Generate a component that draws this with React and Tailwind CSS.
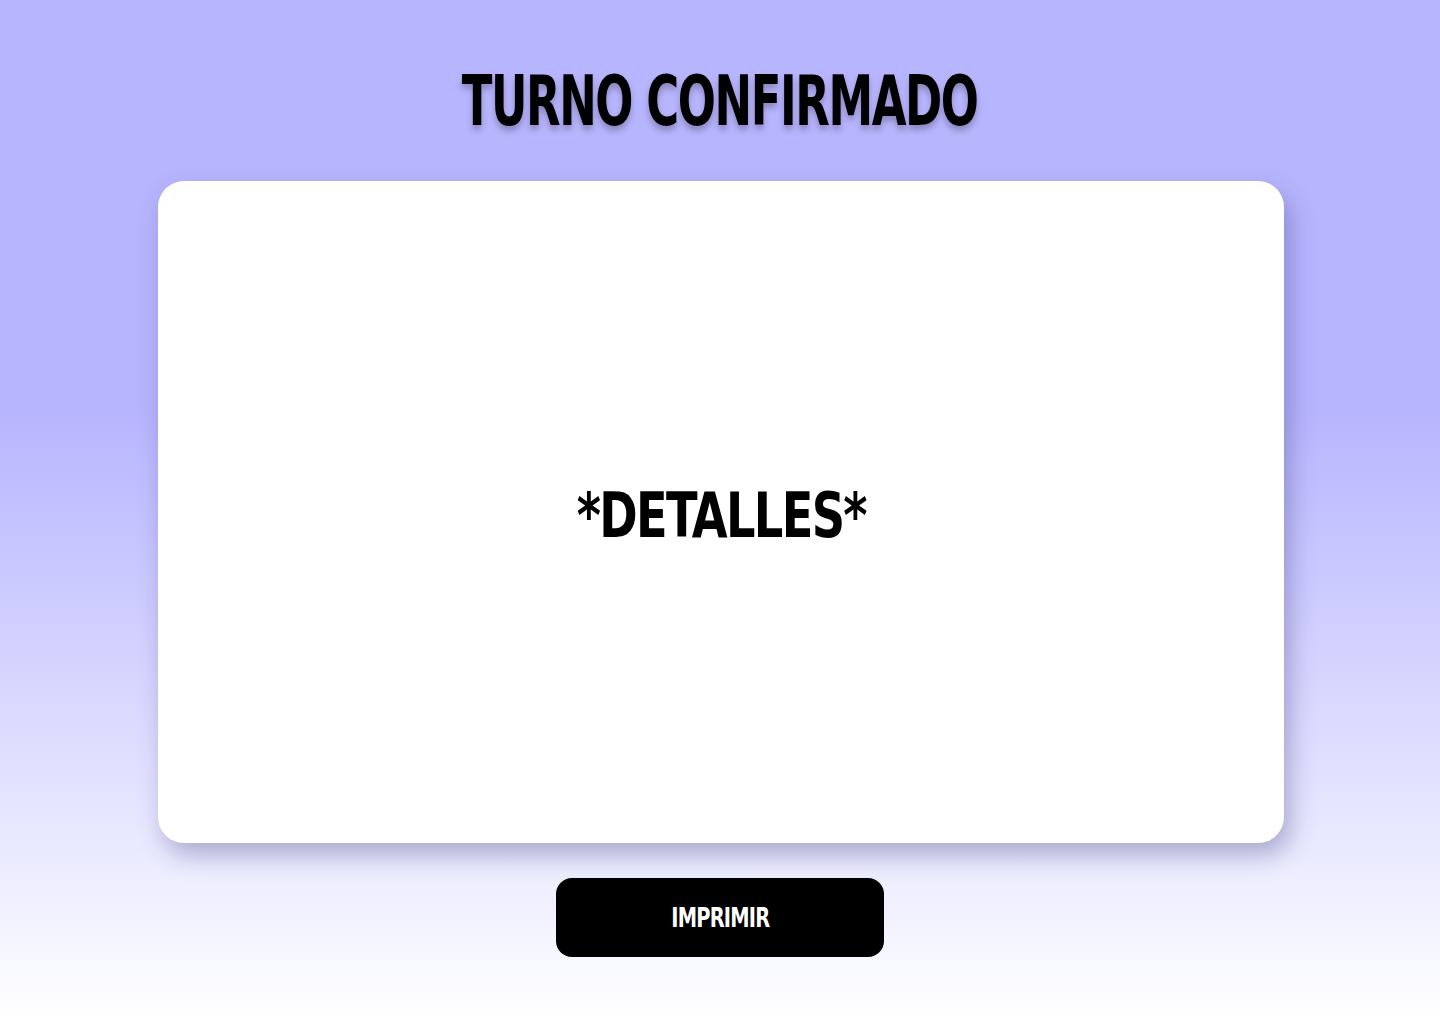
import React from 'react';

const App = () => {
  const handlePrint = () => {
    window.print();
  };

  return (
    <div
      className="min-h-screen w-full flex flex-col items-center bg-gradient-to-b from-[#b8b5ff] from-40% to-[#ffffff] pt-[66px] pb-[67px]"
      style={{ fontFamily: '"DejaVu Sans Condensed", "DejaVu Sans", sans-serif' }}
    >
      {/* Title */}
      <h1 className="h-[115px]">
        <span className="inline-block scale-x-[0.713] text-[70px] leading-[70px] font-bold text-black tracking-[-2px] [text-shadow:0_5px_7px_rgba(0,0,0,0.25)]">
          TURNO CONFIRMADO
        </span>
      </h1>

      {/* Details card */}
      <div className="w-[1126px] h-[662px] ml-[2px] bg-white rounded-[26px] shadow-[6px_12px_24px_rgba(60,55,120,0.35)] flex items-center justify-center">
        <h2 className="inline-block scale-x-[0.83] text-[62px] leading-none font-bold text-black tracking-[-2px] mt-[8px]">
          *DETALLES*
        </h2>
      </div>

      {/* Print button */}
      <button
        onClick={handlePrint}
        className="mt-[35px] w-[328px] h-[79px] bg-black text-white rounded-[16px] flex items-center justify-center"
      >
        <span className="inline-block scale-x-[0.8] text-[27px] font-bold tracking-[-1px] mt-[2px]">IMPRIMIR</span>
      </button>
    </div>
  );
};

export default App;
